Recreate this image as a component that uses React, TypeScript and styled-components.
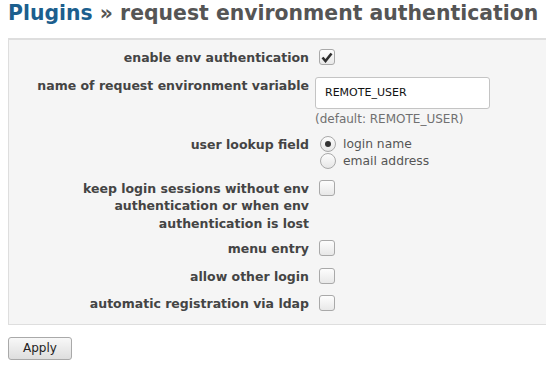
import React from 'react';
import styled, { createGlobalStyle } from 'styled-components';

const Global = createGlobalStyle`
  body {
    margin: 0;
    background: #fff;
    font-family: "DejaVu Sans", sans-serif;
    color: #333;
  }
`;

const Page = styled.div`
  padding: 0 0 8px 8px;
`;

const Title = styled.h1`
  margin: 0;
  font-size: 20.4px;
  font-weight: bold;
  line-height: 26px;
  color: #555;

  a {
    color: #1c5f8e;
    text-decoration: none;
  }
`;

const Panel = styled.div`
  margin-top: 12px;
  background: #f5f5f5;
  border: 1px solid #dedede;
  border-top-width: 2px;
  border-right: none;
  padding: 4px 0 6px;
`;

const Row = styled.div<{ $tight?: boolean }>`
  display: grid;
  grid-template-columns: 300px 1fr;
  column-gap: 6px;
  padding: 5px 0 ${p => (p.$tight ? '3px' : '5px')};
`;

const Label = styled.label<{ $wrap?: boolean }>`
  text-align: right;
  font-size: 12.5px;
  font-weight: bold;
  color: #444;
  line-height: 17.5px;
  padding-left: ${p => (p.$wrap ? '60px' : '0')};
`;

const Control = styled.div`
  display: flex;
  flex-direction: column;
  align-items: flex-start;
`;

const Box = styled.span`
  box-sizing: border-box;
  width: 16px;
  height: 16px;
  border: 1px solid #a9a9a9;
  border-radius: 3px;
  background: linear-gradient(#fdfdfd, #e8e8e8);
  display: inline-flex;
  align-items: center;
  justify-content: center;
  margin-left: 4px;
`;

const TextInput = styled.input`
  box-sizing: border-box;
  width: 175px;
  height: 32px;
  border: 1px solid #c4c4c4;
  border-radius: 3px;
  background: #fff;
  padding: 0 9px;
  font-family: "DejaVu Sans", sans-serif;
  font-size: 11px;
  color: #111;
  outline: none;
`;

const Hint = styled.div`
  margin-top: 3px;
  font-size: 12px;
  line-height: 14px;
  color: #707070;
`;

const RadioLine = styled.div`
  display: flex;
  align-items: center;
  gap: 7px;
  margin-left: 5px;
  height: 17px;
  font-size: 12.3px;
  color: #555;
`;

const Radio = styled.span<{ $on?: boolean }>`
  box-sizing: border-box;
  width: 16px;
  height: 16px;
  border-radius: 50%;
  border: 1px solid #a9a9a9;
  background: linear-gradient(#fdfdfd, #e6e6e6);
  display: inline-flex;
  align-items: center;
  justify-content: center;

  &::after {
    content: '';
    display: ${p => (p.$on ? 'block' : 'none')};
    width: 6px;
    height: 6px;
    border-radius: 50%;
    background: #333;
  }
`;

const Button = styled.button`
  box-sizing: border-box;
  margin-top: 12px;
  width: 64px;
  height: 23px;
  border: 1px solid #a9a9a9;
  border-radius: 3px;
  background: linear-gradient(#f8f8f8, #dedede);
  font-family: "DejaVu Sans", sans-serif;
  font-size: 12px;
  color: #222;
  padding: 0;
`;

const Check = ({ checked }: { checked?: boolean }) => (
  <Box>
    {checked && (
      <svg width='12' height='11' viewBox='0 0 12 11'>
        <path d='M1.5 5.5 L4.5 9 L10.5 1.5' fill='none' stroke='#2e2e2e' strokeWidth='2.6' />
      </svg>
    )}
  </Box>
);

const rows = [
  { label: 'keep login sessions without env authentication or when env authentication is lost', wrap: true },
  { label: 'menu entry' },
  { label: 'allow other login' },
  { label: 'automatic registration via ldap' }
];

export default function App () {
  return (
    <Page>
      <Global />
      <Title>
        <a href='#'>Plugins</a> » request environment authentication
      </Title>
      <Panel>
        <Row>
          <Label>enable env authentication</Label>
          <Control><Check checked /></Control>
        </Row>
        <Row>
          <Label>name of request environment variable</Label>
          <Control>
            <TextInput defaultValue='REMOTE_USER' />
            <Hint>(default: REMOTE_USER)</Hint>
          </Control>
        </Row>
        <Row>
          <Label>user lookup field</Label>
          <Control>
            <RadioLine><Radio $on />login name</RadioLine>
            <RadioLine><Radio />email address</RadioLine>
          </Control>
        </Row>
        {rows.map(r => (
          <Row key={r.label} $tight={r.wrap}>
            <Label $wrap={r.wrap}>{r.label}</Label>
            <Control><Check /></Control>
          </Row>
        ))}
      </Panel>
      <Button>Apply</Button>
    </Page>
  );
}
